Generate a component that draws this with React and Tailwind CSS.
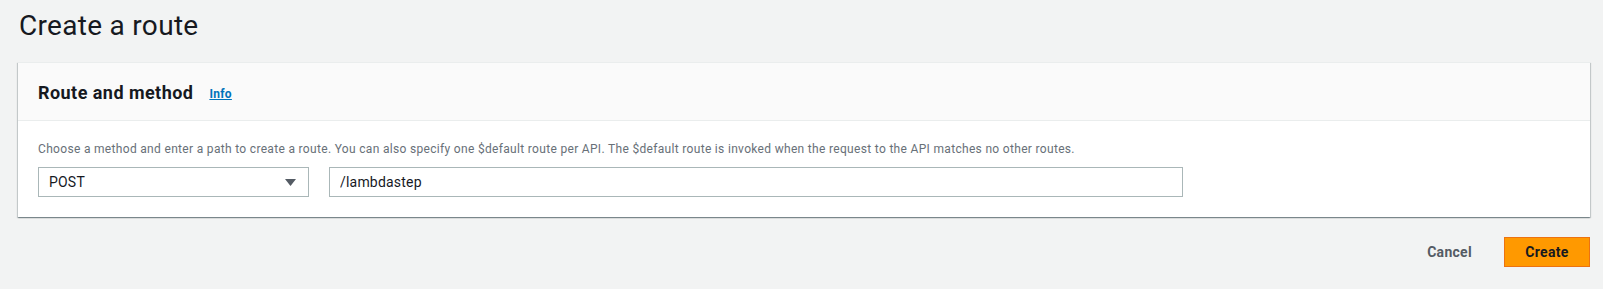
import React, { useState } from "react";

const font = { fontFamily: "Roboto, 'Open Sans', Arial, sans-serif" };

const App = () => {
  const [method, setMethod] = useState("POST");
  const [path, setPath] = useState("/lambdastep");

  return (
    <div
      className="min-h-[289px] bg-[#f2f3f3] pl-[18px] pr-[13px] pt-[8px] text-[#16191f]"
      style={font}
    >
      <h1 className="text-[28px] leading-[36px] font-normal pl-px mb-[18px] tracking-[0.3px]">Create a route</h1>

      {/* Card */}
      <div className="bg-white border-t border-[#eaeded] shadow-[0_1px_1px_0_rgba(0,28,36,0.3),1px_1px_1px_0_rgba(0,28,36,0.15),-1px_1px_1px_0_rgba(0,28,36,0.15)]">
        <div className="h-[58px] bg-[#fafafa] border-b border-[#eaeded] flex items-center px-[20px] pt-[2px]">
          <h2 className="text-[18px] font-bold leading-[22px] tracking-[0.45px]">Route and method</h2>
          <a href="#" className="ml-[16px] mt-[3px] text-[12px] font-bold text-[#0073bb] underline tracking-[0.3px]">
            Info
          </a>
        </div>
        <div className="px-[20px] pt-[20px] pb-[20px]">
          <p className="text-[12px] leading-[16px] text-[#687078] mb-[10px] tracking-[0.32px]">
            Choose a method and enter a path to create a route. You can also specify one $default route per API. The $default route is invoked when the request to the API matches no other routes.
          </p>
          <div className="flex gap-[20px]">
            <div className="relative w-[271px] h-[30px] border border-[#aab7b8] bg-white">
              <select
                value={method}
                onChange={(e) => setMethod(e.target.value)}
                className="appearance-none w-full h-full pl-[10px] text-[14px] bg-transparent outline-none tracking-[0.2px]"
                style={font}
              >
                <option>ANY</option>
                <option>GET</option>
                <option>POST</option>
                <option>PUT</option>
                <option>DELETE</option>
              </select>
              <svg
                className="absolute right-[12px] top-[11px] pointer-events-none"
                width="11"
                height="7"
                viewBox="0 0 11 7"
              >
                <polygon points="0,0 11,0 5.5,7" fill="#545b64" />
              </svg>
            </div>
            <input
              value={path}
              onChange={(e) => setPath(e.target.value)}
              className="w-[854px] h-[30px] border border-[#aab7b8] pl-[10px] text-[14px] outline-none tracking-[0.2px]"
              style={font}
            />
          </div>
        </div>
      </div>

      {/* Actions */}
      <div className="flex justify-end items-center mt-[20px]">
        <button className="text-[14px] font-bold text-[#545b64] px-[20px] h-[30px] mr-[12px] tracking-[0.3px]">Cancel</button>
        <button className="w-[86px] h-[30px] bg-[#ff9900] border border-[#ec7211] text-[14px] font-bold text-[#16191f] tracking-[0.3px]">
          Create
        </button>
      </div>
    </div>
  );
};

export default App;
